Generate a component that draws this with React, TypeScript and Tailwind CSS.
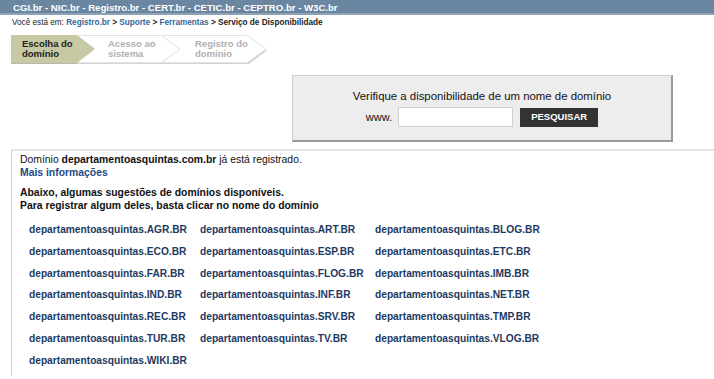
import React from "react";

const domains = [
  ["AGR", "ART", "BLOG"],
  ["ECO", "ESP", "ETC"],
  ["FAR", "FLOG", "IMB"],
  ["IND", "INF", "NET"],
  ["REC", "SRV", "TMP"],
  ["TUR", "TV", "VLOG"],
  ["WIKI"],
];

function Steps() {
  return (
    <div className="relative ml-[11px] mt-[7px] h-[30px] w-[262px]">
      <svg className="absolute left-0 top-0" width="262" height="30" viewBox="0 0 262 30">
        <polygon points="238,2 256,15.5 238,29 152,29 152,2" fill="#d4d4d4" />
        <polygon points="152,2 170,15.5 152,29 66,29 66,2" fill="#d4d4d4" />
        <polygon points="66,2 84,15.5 66,29 0,29 0,2" fill="#b7b7b0" />
        <polygon points="152.5,0.5 236.5,0.5 255,14 236.5,27.5 152.5,27.5" fill="#ffffff" stroke="#e2e2e2" strokeWidth="1" />
        <polygon points="66.5,0.5 150.5,0.5 169,14 150.5,27.5 66.5,27.5" fill="#ffffff" stroke="#e2e2e2" strokeWidth="1" />
        <polygon points="0,0 66,0 84,14 66,28 0,28" fill="#c6c9a3" />
      </svg>
      <div className="relative flex font-['Liberation_Sans',Arial,sans-serif] text-[9.5px] font-bold leading-[10px]">
        <div className="w-[97px] pl-[11px] pt-[4px] text-[#222]">Escolha do<br />domínio</div>
        <div className="w-[87px] pt-[4px] text-[#b0b0b0]">Acesso ao<br />sistema</div>
        <div className="pt-[4px] text-[#b0b0b0]">Registro do<br />domínio</div>
      </div>
    </div>
  );
}

export default function App() {
  return (
    <div className="min-h-[379px] w-[714px] overflow-hidden bg-white font-['Liberation_Sans',Arial,sans-serif] text-[#111]">
      <div className="h-[15px] border-b-[2px] border-[#8fa3b8] bg-[#6b86a1] pl-[13px] text-[9.6px] font-bold leading-[15px] text-white">
        CGI.br - NIC.br - Registro.br - CERT.br - CETIC.br - CEPTRO.br - W3C.br
      </div>
      <div className="mt-[2px] pl-[12px] text-[8.2px] leading-[11px] text-[#222]">
        Você está em: <span className="font-bold text-[#36679c]">Registro.br</span>
        <span className="font-bold"> &gt; </span>
        <span className="font-bold text-[#36679c]">Suporte</span>
        <span className="font-bold"> &gt; </span>
        <span className="font-bold text-[#36679c]">Ferramentas</span>
        <span className="font-bold"> &gt; Serviço de Disponibilidade</span>
      </div>
      <Steps />
      <div className="ml-[292px] mt-[10px] flex h-[67px] w-[381px] flex-col items-center border border-r-[2px] border-b-[2px] border-[#cfcfcf] border-r-[#9a9a9a] border-b-[#9a9a9a] bg-[#ededed] pt-[14px]">
        <div className="text-[11.4px] leading-[13px] text-[#111]">Verifique a disponibilidade de um nome de domínio</div>
        <div className="mt-[4px] flex items-center">
          <span className="mr-[6px] text-[11px] text-[#111]">www.</span>
          <div className="h-[20px] w-[115px] border border-[#cfcfcf] bg-white" />
          <div className="ml-[7px] flex h-[19px] w-[78px] items-center justify-center bg-[#333333] text-[9.5px] font-bold text-white">PESQUISAR</div>
        </div>
      </div>
      <div className="ml-[11px] mt-[7px] border-t-[2px] border-l border-t-[#e6e6e6] border-l-[#cfcfcf] pl-[8px] pt-[3px] text-[10.4px] leading-[12.5px]">
        <div>
          Domínio <b>departamentoasquintas.com.br</b> já está registrado.
        </div>
        <div className="font-bold text-[#1f4a86]">Mais informações</div>
        <div className="mt-[8px] font-bold">Abaixo, algumas sugestões de domínios disponíveis.</div>
        <div className="font-bold">Para registrar algum deles, basta clicar no nome do domínio</div>
        <div className="ml-[9px] mt-[11px] grid grid-cols-[171px_175px_auto] text-[10.2px] font-bold leading-[13px] text-[#1d3a63]">
          {domains.map((row, i) =>
            row.map((d, j) => (
              <div key={`${i}-${j}`} className="h-[21.8px]">
                departamentoasquintas.{d}.BR
              </div>
            ))
          )}
        </div>
      </div>
    </div>
  );
}
